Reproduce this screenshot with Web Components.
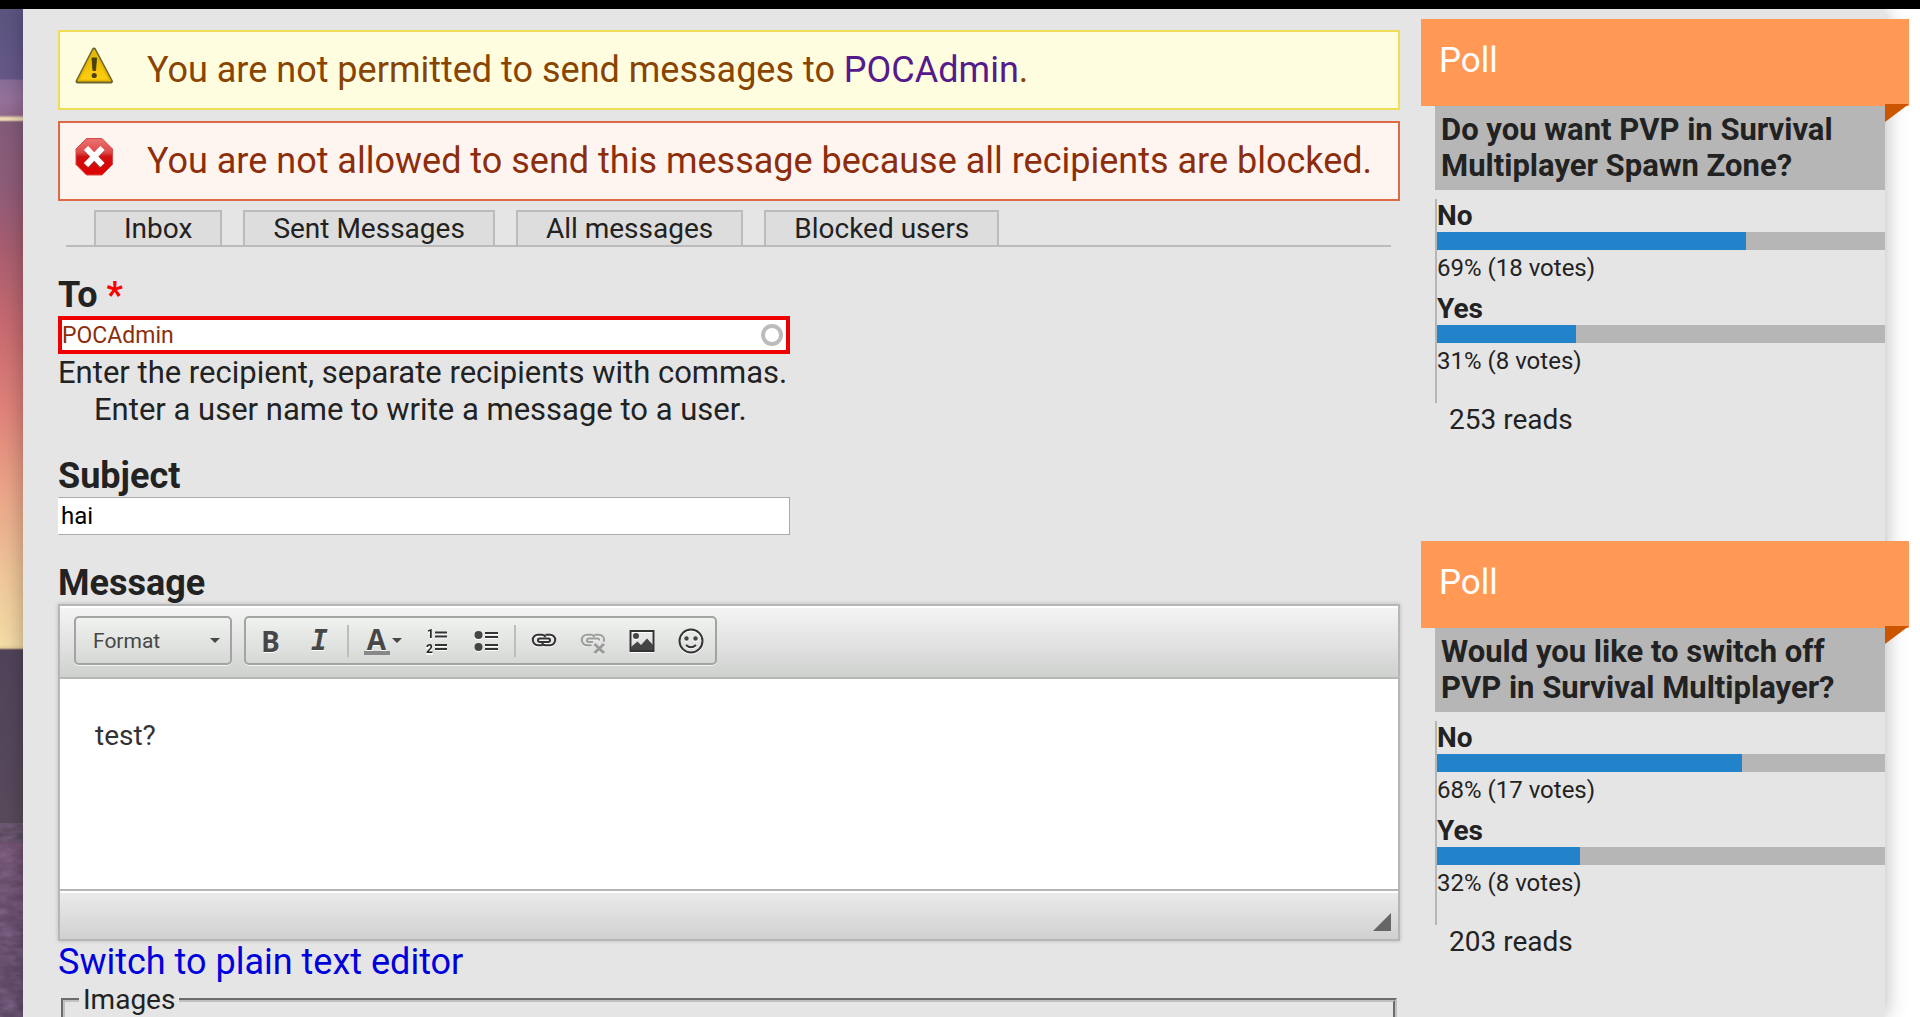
<!DOCTYPE html>
<html lang="en">
<head>
<meta charset="utf-8">
<title>Write new message</title>
<style>
    body {
        margin: 0;
        font-family: Roboto, "Liberation Sans", sans-serif;
        font-size: 28px;
        color: #222;
        background: #fff;
        overflow: hidden;
    }
</style>
</head>
<body>
<site-page>
    <site-alert type="warning">You are not permitted to send messages to <a href="#user">POCAdmin</a>.</site-alert>
    <site-alert type="error">You are not allowed to send this message because all recipients are blocked.</site-alert>
    <tab-bar tabs="Inbox,Sent Messages,All messages,Blocked users"></tab-bar>
    <form-field label="To" value="POCAdmin" required invalid>
        Enter the recipient, separate recipients with commas.
        <div>Enter a user name to write a message to a user.</div>
    </form-field>
    <form-field label="Subject" value="hai"></form-field>
    <rich-editor label="Message" value="test?"></rich-editor>
    <image-fieldset label="Images"></image-fieldset>

    <poll-block slot="side" reads="253">
        <span slot="question">Do you want PVP in Survival Multiplayer Spawn Zone?</span>
        <poll-choice label="No" percent="69" votes="18"></poll-choice>
        <poll-choice label="Yes" percent="31" votes="8"></poll-choice>
    </poll-block>
    <poll-block slot="side" reads="203">
        <span slot="question">Would you like to switch off PVP in Survival Multiplayer?</span>
        <poll-choice label="No" percent="68" votes="17"></poll-choice>
        <poll-choice label="Yes" percent="32" votes="8"></poll-choice>
    </poll-block>
</site-page>

<script>
class SitePage extends HTMLElement {
    constructor() {
        super();
        this.shadowDOM = this.attachShadow({mode : "open"});
        this.shadowDOM.innerHTML = `
<style>
    :host {
        display: flex;
        height: 100vh;
        box-sizing: border-box;
        border-top: 9px solid #000;
        overflow: hidden;
    }
    .wallpaper {
        flex: 0 0 23px;
        background: linear-gradient(to bottom,
            #5b5480 0, #66598a 70px, #8a6d98 71px, #96729a 90px, #93698f 106px,
            #f0dcb4 109px, #f0dcb4 111px, #835c7a 113px, #8f5c78 180px, #a85e70 240px,
            #c86b70 320px, #df8279 400px, #eba488 480px, #efc498 560px, #f4dca6 636px,
            #e6cb98 639px, #51445a 641px, #5a4a5c 831px, #704f6e 835px, #664c6a 920px, #5c4866 1017px);
    }
    .wallpaper svg {
        display: block;
        width: 100%;
        height: 100%;
    }
    main {
        flex: 1;
        display: flex;
        gap: 21px;
        min-width: 0;
        background: #e5e5e5;
        box-shadow: 0 0 20px rgba(0, 0, 0, 0.3);
    }
    .content {
        flex: 1;
        min-width: 0;
        padding: 21px 0 0 35px;
    }
    aside {
        flex: 0 0 464px;
        padding-top: 10px;
    }
    .margin {
        flex: 0 0 35px;
    }
</style>
<div class="wallpaper">
    <svg aria-hidden="true">
        <filter id="grain"><feTurbulence type="fractalNoise" baseFrequency="0.06 0.14" numOctaves="3" seed="4"/>
        <feColorMatrix values="0 0 0 0 .25  0 0 0 0 .16  0 0 0 0 .3  1.2 0 0 0 -.4"/></filter>
        <rect y="833" width="23" height="184" filter="url(#grain)"/>
    </svg>
</div>
<main>
    <div class="content"><slot></slot></div>
    <aside><slot name="side"></slot></aside>
</main>
<div class="margin"></div>`;
    }
}

class SiteAlert extends HTMLElement {
    constructor() {
        super();
        this.shadowDOM = this.attachShadow({mode : "open"});
    }

    connectedCallback() {
        const icons = {
            warning: `
    <defs><linearGradient id="g" x1="0" y1="0" x2="0" y2="1"><stop offset="0" stop-color="#e0b400"/><stop offset="1" stop-color="#ffcf10"/></linearGradient></defs>
    <path d="M19 3.5 L36 35.5 H2.5 Z" fill="none" stroke="#6b6530" stroke-width="4" stroke-linejoin="round"/>
    <path d="M19 4.5 L35 34.5 H3.5 Z" fill="url(#g)" stroke="#e8b800" stroke-width="2" stroke-linejoin="round"/>
    <path d="M17 12 h4.5 l-1 12.5 h-2.5 z" fill="#4a4210" stroke="#4a4210" stroke-linejoin="round"/>
    <circle cx="19.2" cy="29.5" r="2.6" fill="#4a4210"/>`,
            error: `
    <defs><linearGradient id="g" x1="0" y1="0" x2="0" y2="1"><stop offset="0" stop-color="#ea7370"/><stop offset=".38" stop-color="#dd4a4a"/><stop offset=".5" stop-color="#d01010"/><stop offset="1" stop-color="#e00000"/></linearGradient></defs>
    <path d="M11.5 1.500 h15.500 L37.500 12 v15.500 L27 38 H11.500 L1 27.500 V12 Z" fill="url(#g)" stroke="#d84a4a"/>
    <path d="M11 12.500 L27 29.500 M27 12.500 L11 29.500" stroke="#7b5a55" stroke-width="6" opacity=".5"/>
    <path d="M11 11 L27.500 28 M27.500 11 L11 28" stroke="#fff" stroke-width="6"/>`
        };
        this.shadowDOM.innerHTML = `
<style>
    :host {
        display: flex;
        align-items: flex-start;
        gap: 33px;
        height: 80px;
        box-sizing: border-box;
        margin-bottom: 11px;
        padding: 14px 14px 0 15px;
        border: 2px solid #ed5;
        background: #fffde0;
        color: #840;
        font-size: 36px;
        line-height: 48px;
        white-space: nowrap;
    }
    :host([type="error"]) {
        border-color: #dd6a47;
        background: #fef5f1;
        color: #8c2e0b;
    }
    svg {
        flex: 0 0 39px;
        height: 39px;
    }
    ::slotted(a) {
        color: #551a8b;
        text-decoration: none;
    }
</style>
<svg viewBox="0 0 39 39" aria-hidden="true">${icons[this.getAttribute("type")]}</svg>
<div><slot></slot></div>`;
    }
}

class TabBar extends HTMLElement {
    constructor() {
        super();
        this.shadowDOM = this.attachShadow({mode : "open"});
    }

    connectedCallback() {
        const tabs = this.getAttribute("tabs").split(",");
        this.shadowDOM.innerHTML = `
<style>
    :host {
        display: block;
        margin: -2px 9px 28px 8px;
    }
    nav {
        display: flex;
        gap: 21px;
        padding: 0 28px;
        border-bottom: 2px solid #bbb;
    }
    a {
        padding: 0 28px;
        border: 2px solid #bbb;
        border-bottom: 0;
        background: #ddd;
        color: #222;
        line-height: 33px;
        text-decoration: none;
        white-space: nowrap;
    }
</style>
<nav>${tabs.map(tab => `<a href="#">${tab}</a>`).join("")}</nav>`;
    }
}

class FormField extends HTMLElement {
    constructor() {
        super();
        this.shadowDOM = this.attachShadow({mode : "open"});
    }

    connectedCallback() {
        const required = this.hasAttribute("required");
        this.shadowDOM.innerHTML = `
<style>
    :host {
        display: block;
        margin-bottom: 28px;
        font-size: 31px;
        line-height: 37px;
    }
    label {
        display: block;
        font-size: 36px;
        font-weight: bold;
        line-height: 41px;
    }
    label span {
        color: #f00;
    }
    .box {
        position: relative;
        width: 732px;
        max-width: 100%;
    }
    input {
        display: block;
        width: 100%;
        height: 38px;
        box-sizing: border-box;
        padding: 0 2px;
        border: 1px solid #aaa;
        border-left-color: #fff;
        border-radius: 0;
        background: #fff;
        color: #000;
        font: 24px Roboto, "Liberation Sans", sans-serif;
    }
    :host([invalid]) input {
        padding: 0;
        border: 4px solid #ee0000;
        color: #8c2e0b;
        font-size: 23px;
    }
    .throbber {
        position: absolute;
        right: 7px;
        top: 8px;
        width: 14px;
        height: 14px;
        border: 4px solid #bbb;
        border-radius: 50%;
    }
    ::slotted(div) {
        padding-left: 36px;
    }
</style>
<label for="field">${this.getAttribute("label")}${required ? " <span>*</span>" : ""}</label>
<div class="box">
    <input id="field" type="text" value="${this.getAttribute("value")}">
    ${this.hasAttribute("invalid") ? `<div class="throbber"></div>` : ""}
</div>
<div><slot></slot></div>`;
    }
}

class RichEditor extends HTMLElement {
    constructor() {
        super();
        this.shadowDOM = this.attachShadow({mode : "open"});
    }

    connectedCallback() {
        this.shadowDOM.innerHTML = `
<style>
    :host {
        display: block;
    }
    label {
        display: block;
        font-size: 36px;
        font-weight: bold;
        line-height: 41px;
    }
    .editor {
        border: 2px solid #b6b6b6;
        box-shadow: 0 0 4px rgba(0, 0, 0, 0.2);
    }
    .toolbar {
        display: flex;
        gap: 12px;
        height: 73px;
        box-sizing: border-box;
        padding: 10px 14px;
        border-bottom: 2px solid #b6b6b6;
        background: linear-gradient(#f5f5f5, #cfd1cf);
        box-shadow: inset 0 2px 0 #fff;
    }
    .group, select {
        height: 49px;
        box-sizing: border-box;
        border: 2px solid #a2a4a2;
        border-radius: 5px;
        background: linear-gradient(#f0f2f0, #d6d8d6);
        box-shadow: 0 1px 0 #f4f4f4;
    }
    .combo {
        position: relative;
    }
    select {
        width: 158px;
        padding: 0 17px;
        appearance: none;
        color: #474747;
        font: 21px Roboto, "Liberation Sans", sans-serif;
    }
    .caret {
        display: inline-block;
        border: 5px solid transparent;
        border-top-color: #474747;
        border-bottom: 0;
    }
    .combo .caret {
        position: absolute;
        right: 12px;
        top: 22px;
        pointer-events: none;
    }
    .group {
        display: flex;
        align-items: center;
    }
    button {
        display: flex;
        align-items: center;
        justify-content: center;
        width: 49px;
        height: 44px;
        padding: 0;
        border: 0;
        background: none;
        color: #474747;
        font: bold 28px "Open Sans", sans-serif;
        text-shadow: 0 1px 0 #fff;
    }
    button.italic {
        font: italic bold 28px "DejaVu Sans Mono", monospace;
    }
    button.color {
        width: 61px;
        gap: 2px;
    }
    .letter {
        width: 26px;
        border-bottom: 4px solid #888;
        line-height: 24px;
    }
    hr {
        width: 2px;
        height: 32px;
        margin: 0 3px;
        border: 0;
        background: #bcbebc;
    }
    svg {
        width: 26px;
        height: 26px;
        fill: none;
        stroke: #333;
        stroke-width: 2;
        overflow: visible;
        filter: drop-shadow(0 1px 0 #fff);
    }
    svg text {
        fill: #222;
        stroke: none;
        font: bold 12px Roboto, sans-serif;
    }
    .disabled {
        opacity: 0.4;
    }
    .fill {
        fill: #444;
        stroke: none;
    }
    textarea {
        display: block;
        width: 100%;
        height: 210px;
        box-sizing: border-box;
        padding: 39px 35px;
        border: 0;
        outline: 0;
        resize: none;
        background: #fff;
        color: #333;
        font: 28px/36px Roboto, "Liberation Sans", sans-serif;
    }
    .bottom {
        display: flex;
        align-items: flex-end;
        justify-content: flex-end;
        height: 50px;
        box-sizing: border-box;
        padding: 8px 7px;
        border-top: 2px solid #b6b6b6;
        background: linear-gradient(#ebebeb, #cfd1cf);
        box-shadow: inset 0 2px 0 #fff;
    }
    .resizer {
        border: 9px solid transparent;
        border-right-color: #666;
        border-bottom-color: #666;
    }
    .switch {
        color: #0000dd;
        font-size: 36px;
        line-height: 42px;
        text-decoration: none;
    }
</style>
<label for="body">${this.getAttribute("label")}</label>
<div class="editor">
    <div class="toolbar">
        <div class="combo">
            <select aria-label="Format"><option>Format</option></select>
            <span class="caret"></span>
        </div>
        <div class="group">
            <button type="button">B</button>
            <button type="button" class="italic">I</button>
            <hr>
            <button type="button" class="color"><span class="letter">A</span><span class="caret"></span></button>
            <button type="button" aria-label="Numbered list"><svg viewBox="0 0 26 26">
                <text x="2" y="10">1</text><text x="1" y="25">2</text>
                <path d="M10 4.5 h12 M10 8.5 h12 M10 17 h12 M10 21 h12"/></svg></button>
            <button type="button" aria-label="Bulleted list"><svg viewBox="0 0 26 26">
                <circle class="fill" cx="4.5" cy="7" r="4"/><circle class="fill" cx="4.5" cy="19" r="4"/>
                <path d="M11 5 h13 M11 9 h13 M11 17 h13 M11 21 h13"/></svg></button>
            <hr>
            <button type="button" aria-label="Link"><svg viewBox="0 0 26 26">
                <path d="M11.5 17.2 H7 a5.2 5.2 0 0 1 0 -10.4 H11 q2.5 0 3.5 2.2 M14.5 6.8 H19 a5.2 5.2 0 0 1 0 10.4 h-4.5 q-2.5 0 -3.5 -2.2"/>
                <rect x="7" y="10.5" width="12" height="3.5" rx="1.7"/></svg></button>
            <button type="button" class="disabled" aria-label="Unlink"><svg viewBox="0 0 26 26">
                <path d="M11.5 17.2 H7 a5.2 5.2 0 0 1 0 -10.4 H11 q2.5 0 3.5 2.2 M14.5 6.8 H19 a5.2 5.2 0 0 1 4.8 7"/>
                <path d="M13 14 H8.5 q-1.500 0 -1.500 -1.700 t1.500 -1.800 H17.500 q2 0 1.500 2"/>
                <path d="M14.5 16 L24 25 M24 16 L14.5 25" stroke-width="3"/></svg></button>
            <button type="button" aria-label="Image"><svg viewBox="0 0 26 26">
                <path d="M1.5 3 H24.5 V23 H1.5 Z"/><circle class="fill" cx="7" cy="8" r="3"/>
                <path class="fill" d="M2 22 V19 L8.5 13.5 L12 17 L18 10.5 L24 17 V22 Z"/></svg></button>
            <button type="button" aria-label="Smiley"><svg viewBox="0 0 26 26">
                <circle cx="13" cy="13" r="11.5"/><circle class="fill" cx="8.5" cy="10.5" r="2.2"/><circle class="fill" cx="17.5" cy="10.5" r="2.2"/>
                <path d="M8 17 q5 4.5 10 0"/></svg></button>
        </div>
    </div>
    <textarea id="body">${this.getAttribute("value")}</textarea>
    <div class="bottom"><span class="resizer"></span></div>
</div>
<a class="switch" href="#plain">Switch to plain text editor</a>`;
    }
}

class ImageFieldset extends HTMLElement {
    constructor() {
        super();
        this.shadowDOM = this.attachShadow({mode : "open"});
    }

    connectedCallback() {
        this.shadowDOM.innerHTML = `
<style>
    :host {
        display: block;
        line-height: 33px;
    }
    fieldset {
        min-height: 80px;
        margin: 0 3px;
        padding: 0 14px;
        border: 4px groove #c0c0c0;
    }
    legend {
        padding: 0 4px;
    }
</style>
<fieldset><legend>${this.getAttribute("label")}</legend></fieldset>`;
    }
}

class PollBlock extends HTMLElement {
    constructor() {
        super();
        this.shadowDOM = this.attachShadow({mode : "open"});
    }

    connectedCallback() {
        this.shadowDOM.innerHTML = `
<style>
    :host {
        display: block;
        margin-bottom: 104px;
    }
    h2 {
        position: relative;
        margin: 0 -24px 0 0;
        padding: 18px 18px 22px;
        background: #ff9955;
        color: #fff;
        font-size: 35px;
        font-weight: normal;
        line-height: 47px;
    }
    /* folded ribbon end hanging over the page edge */
    h2::after {
        content: "";
        position: absolute;
        right: 0;
        top: calc(100% - 2px);
        border-top: 18px solid #cc5500;
        border-right: 24px solid transparent;
    }
    .body {
        margin-left: 14px;
    }
    h3 {
        margin: 0 0 9px;
        padding: 6px 5px 6px 6px;
        background: #b6b6b6;
        font-size: 31px;
        line-height: 36px;
    }
    .choices {
        padding-bottom: 18px;
        border-left: 2px solid #b6b6b6;
    }
    p {
        margin: 0;
        padding-left: 14px;
        line-height: 34px;
    }
</style>
<h2>Poll</h2>
<div class="body">
    <h3><slot name="question"></slot></h3>
    <div class="choices"><slot></slot></div>
    <p>${this.getAttribute("reads")} reads</p>
</div>`;
    }
}

class PollChoice extends HTMLElement {
    constructor() {
        super();
        this.shadowDOM = this.attachShadow({mode : "open"});
    }

    connectedCallback() {
        const percent = this.getAttribute("percent");
        this.shadowDOM.innerHTML = `
<style>
    :host {
        display: block;
    }
    .label {
        font-weight: bold;
        line-height: 33px;
    }
    .bar {
        height: 18px;
        background: #b6b6b6;
    }
    .bar div {
        width: ${percent}%;
        height: 100%;
        background: #2283ca;
    }
    .votes {
        font-size: 24px;
        line-height: 36px;
        padding-bottom: 6px;
    }
</style>
<div class="label">${this.getAttribute("label")}</div>
<div class="bar"><div></div></div>
<div class="votes">${percent}% (${this.getAttribute("votes")} votes)</div>`;
    }
}

customElements.define("site-page", SitePage);
customElements.define("site-alert", SiteAlert);
customElements.define("tab-bar", TabBar);
customElements.define("form-field", FormField);
customElements.define("rich-editor", RichEditor);
customElements.define("image-fieldset", ImageFieldset);
customElements.define("poll-block", PollBlock);
customElements.define("poll-choice", PollChoice);
</script>
</body>
</html>
